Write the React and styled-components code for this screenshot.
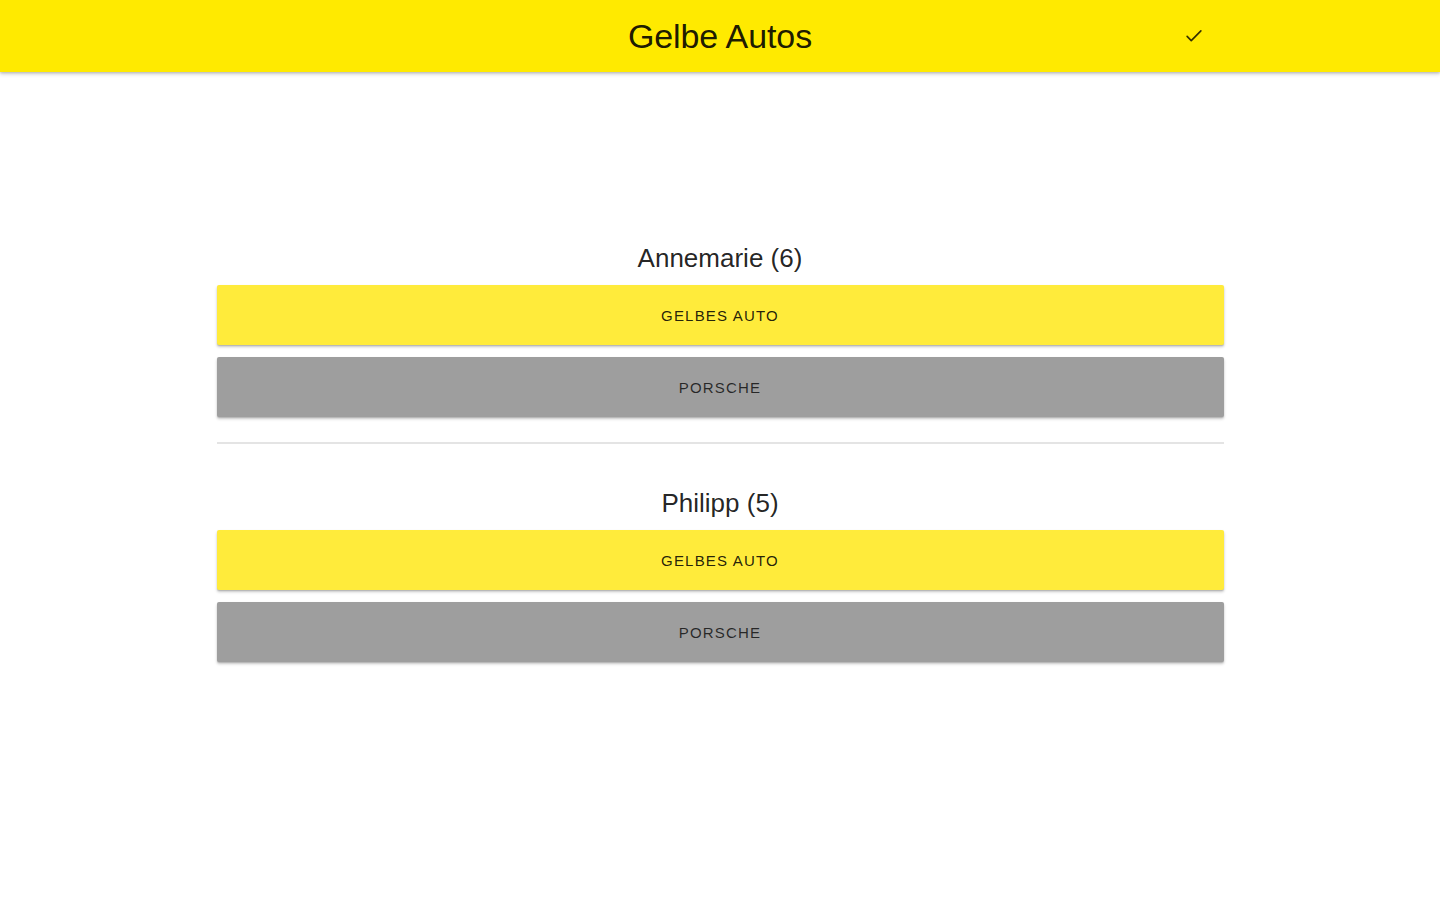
import React from "react";
import styled, { createGlobalStyle } from "styled-components";

const GlobalStyle = createGlobalStyle`
  html, body {
    margin: 0;
    padding: 0;
    background: #ffffff;
    font-family: "Liberation Sans", Arial, sans-serif;
  }
`;

const players = [
  { name: "Annemarie", count: 6 },
  { name: "Philipp", count: 5 },
];

const Page = styled.div`
  min-height: 100vh;
  display: flex;
  flex-direction: column;
`;

const Header = styled.header`
  height: 72px;
  background: #ffea00;
  box-shadow: 0 2px 4px rgba(0, 0, 0, 0.2), 0 1px 2px rgba(0, 0, 0, 0.12);
  display: grid;
  grid-template-columns: 1fr auto 1fr;
  align-items: center;
  position: relative;
  z-index: 1;
`;

const Title = styled.h1`
  grid-column: 2;
  margin: 0;
  font-size: 34px;
  font-weight: 400;
  color: rgba(0, 0, 0, 0.9);
  letter-spacing: -0.1px;
`;

const HeaderActions = styled.div`
  grid-column: 3;
  display: flex;
  justify-content: flex-end;
  padding-right: 234px;
`;

const IconButton = styled.button`
  width: 24px;
  height: 24px;
  padding: 0;
  border: 0;
  background: transparent;
  display: flex;
  align-items: center;
  justify-content: center;
  cursor: pointer;
`;

const Content = styled.main`
  width: 1007px;
  margin: 0 auto;
  padding-top: 171px;
  display: flex;
  flex-direction: column;
`;

const Section = styled.section`
  display: flex;
  flex-direction: column;
  gap: 12px;
`;

const PlayerName = styled.h2`
  margin: 0;
  text-align: center;
  font-size: 26px;
  line-height: 30px;
  font-weight: 400;
  color: rgba(0, 0, 0, 0.87);
`;

const CarButton = styled.button`
  height: 60px;
  border: 0;
  border-radius: 2px;
  background: ${(p) => (p.$variant === "yellow" ? "#ffeb3b" : "#9e9e9e")};
  color: ${(p) => (p.$variant === "yellow" ? "rgba(0,0,0,0.87)" : "rgba(0,0,0,0.75)")};
  font-family: "Liberation Sans", Arial, sans-serif;
  font-size: 15px;
  letter-spacing: 1.2px;
  text-transform: uppercase;
  box-shadow: 0 2px 3px rgba(0, 0, 0, 0.22), 0 1px 1px rgba(0, 0, 0, 0.12);
  cursor: pointer;
`;

const Divider = styled.hr`
  margin: 25px 0 44px;
  border: 0;
  height: 2px;
  background: #e4e4e4;
`;

export default function App() {
  return (
    <Page>
      <GlobalStyle />
      <Header>
        <Title>Gelbe Autos</Title>
        <HeaderActions>
          <IconButton aria-label="Fertig">
            <svg width="22" height="22" viewBox="0 0 24 24" fill="none">
              <path
                d="M4.5 12.5l4.5 4.5L19.5 6.5"
                stroke="rgba(0,0,0,0.8)"
                strokeWidth="1.8"
                strokeLinecap="round"
                strokeLinejoin="round"
              />
            </svg>
          </IconButton>
        </HeaderActions>
      </Header>
      <Content>
        {players.map((p, i) => (
          <React.Fragment key={p.name}>
            {i > 0 && <Divider />}
            <Section>
              <PlayerName>
                {p.name} ({p.count})
              </PlayerName>
              <CarButton $variant="yellow">Gelbes Auto</CarButton>
              <CarButton $variant="gray">Porsche</CarButton>
            </Section>
          </React.Fragment>
        ))}
      </Content>
    </Page>
  );
}
